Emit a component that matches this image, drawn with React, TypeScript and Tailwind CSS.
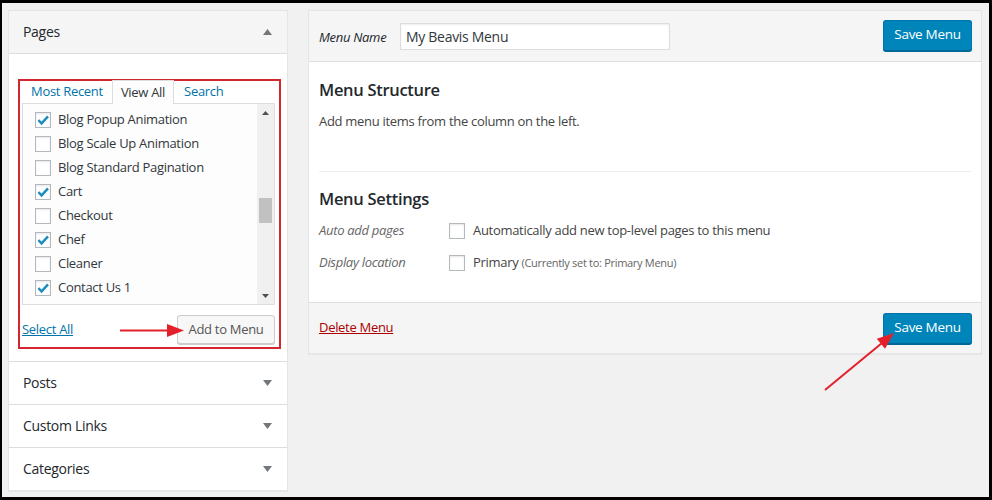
import React from 'react';

const pages: [string, boolean][] = [
  ['Blog Popup Animation', true],
  ['Blog Scale Up Animation', false],
  ['Blog Standard Pagination', false],
  ['Cart', true],
  ['Checkout', false],
  ['Chef', true],
  ['Cleaner', false],
  ['Contact Us 1', true],
];

function Checkbox({ checked }: { checked?: boolean }) {
  return (
    <span className="w-4 h-4 shrink-0 border border-[#b4b9be] bg-white shadow-[inset_0_1px_2px_rgba(0,0,0,0.1)] flex items-center justify-center">
      {checked && (
        <svg width="14" height="14" viewBox="0 0 14 14">
          <path d="M2.4 7.2 L5.6 10.4 L12 3.4" fill="none" stroke="#1e8cbe" strokeWidth="2.4" />
        </svg>
      )}
    </span>
  );
}

function Caret({ up }: { up?: boolean }) {
  return (
    <svg width="9" height="6" viewBox="0 0 9 6">
      <polygon points={up ? '0,6 9,6 4.5,0' : '0,0 9,0 4.5,6'} fill="#72777c" />
    </svg>
  );
}

function SaveButton() {
  return (
    <button className="h-[31px] w-[89px] rounded-[3px] bg-[#0085ba] border border-[#0073aa] border-b-[#006799] shadow-[0_1px_0_#006799] text-white text-[13.5px] leading-none">
      Save Menu
    </button>
  );
}

function Section({ title }: { title: string }) {
  return (
    <div className="h-[43px] border-t border-[#dddddd] flex items-center justify-between pl-[14px] pr-[15px]">
      <span className="text-[14px] leading-[20px] -mt-[1px] text-[#23282d]">{title}</span>
      <Caret />
    </div>
  );
}

export default function App() {
  return (
    <div className="relative w-[992px] h-[500px] bg-black pt-[3px] pl-[2px] pr-[3px] pb-[3px] font-['Open_Sans',sans-serif] tracking-[-0.3px]">
      <div className="h-full bg-[#f1f1f1] flex items-start pt-[7px] pl-[6px] gap-[20px]">
        {/* left column */}
        <div className="w-[280px] h-[481px] border border-[#e5e5e5] bg-white shadow-[0_1px_1px_rgba(0,0,0,0.04)] flex flex-col">
          <div className="h-[43px] shrink-0 bg-[#f5f5f5] border-b border-[#dddddd] flex items-center justify-between pl-[14px] pr-[15px]">
            <span className="text-[14px] leading-[20px] -mt-[1px] text-[#23282d]">Pages</span>
            <Caret up />
          </div>
          <div className="h-[307px] shrink-0 pt-[25px] pl-[9px] pr-[6px]">
            <div className="h-[270px] border-2 border-[#d3262f] pl-[2px] pr-[4px] flex flex-col">
              <div className="h-[22px] flex items-end text-[13px]">
                <span className="px-[9px] h-[22px] flex items-center text-[#0073aa]">Most Recent</span>
                <span className="px-[8px] h-[24px] -mt-[2px] flex items-center border border-b-0 border-[#dddddd] bg-[#fdfdfd] text-[#32373c] relative top-[1px]">
                  View All
                </span>
                <span className="px-[10px] h-[22px] flex items-center text-[#0073aa]">Search</span>
              </div>
              <div className="h-[202px] border border-[#dddddd] bg-[#fdfdfd] flex overflow-hidden">
                <div className="flex-1 pt-[4px] pl-[12px]">
                  {pages.map(([name, checked]) => (
                    <div key={name} className="h-[24px] flex items-center gap-[7px] text-[13px] text-[#32373c]">
                      <Checkbox checked={checked} />
                      <span>{name}</span>
                    </div>
                  ))}
                  <div className="h-[24px] flex items-center">
                    <Checkbox />
                  </div>
                </div>
                <div className="w-[17px] h-full bg-[#f0f0f0] flex flex-col items-center">
                  <div className="h-[17px] flex items-center justify-center">
                    <svg width="7" height="4" viewBox="0 0 7 4">
                      <polygon points="0,4 7,4 3.5,0" fill="#505050" />
                    </svg>
                  </div>
                  <div className="flex-1 w-full px-[2px]">
                    <div className="mt-[77px] h-[25px] bg-[#c1c1c1]" />
                  </div>
                  <div className="h-[17px] flex items-center justify-center">
                    <svg width="7" height="4" viewBox="0 0 7 4">
                      <polygon points="0,0 7,0 3.5,4" fill="#505050" />
                    </svg>
                  </div>
                </div>
              </div>
              <div className="flex-1 flex items-center justify-between pt-[7px]">
                <span className="text-[13px] text-[#0073aa] underline">Select All</span>
                <button className="h-[29px] w-[98px] rounded-[3px] bg-[#f7f7f7] border border-[#cccccc] shadow-[0_1px_0_#cccccc] text-[13px] text-[#555555]">
                  Add to Menu
                </button>
              </div>
            </div>
          </div>
          <Section title="Posts" />
          <Section title="Custom Links" />
          <Section title="Categories" />
        </div>

        {/* right column */}
        <div className="w-[674px] h-[344px] border border-[#e5e5e5] bg-white shadow-[0_1px_1px_rgba(0,0,0,0.04)] flex flex-col">
          <div className="h-[51px] shrink-0 bg-[#f5f5f5] border-b border-[#dfdfdf] flex items-center pl-[10px] pr-[9px]">
            <span className="w-[81px] text-[13px] leading-[20px] mt-[1px] italic text-[#23282d]">Menu Name</span>
            <div className="w-[270px] h-[27px] border border-[#dddddd] bg-white shadow-[inset_0_1px_2px_rgba(0,0,0,0.07)] flex items-center pl-[5px] text-[14px] text-[#32373c]">
              My Beavis Menu
            </div>
            <div className="flex-1" />
            <div className="-mt-[2px]">
              <SaveButton />
            </div>
          </div>
          <div className="h-[240px] shrink-0 px-[10px] pt-[16px]">
            <h2 className="text-[16.5px] leading-[24px] font-semibold text-[#23282d]">Menu Structure</h2>
            <p className="mt-[9px] text-[13px] leading-[20px] text-[#444444]">Add menu items from the column on the left.</p>
            <div className="mt-[40px] border-t border-[#eeeeee]" />
            <h2 className="mt-[15px] text-[16.5px] leading-[24px] font-semibold text-[#23282d]">Menu Settings</h2>
            <div className="mt-[8px] h-[24px] flex items-center text-[13px]">
              <span className="w-[130px] italic text-[#666666]">Auto add pages</span>
              <Checkbox />
              <span className="ml-[8px] text-[#444444]">Automatically add new top-level pages to this menu</span>
            </div>
            <div className="mt-[8px] h-[24px] flex items-center text-[13px]">
              <span className="w-[130px] italic text-[#666666]">Display location</span>
              <Checkbox />
              <span className="ml-[8px] text-[#444444]">
                Primary <span className="text-[11px] text-[#666666]">(Currently set to: Primary Menu)</span>
              </span>
            </div>
          </div>
          <div className="flex-1 bg-[#f5f5f5] border-t border-[#dfdfdf] flex items-center justify-between pl-[10px] pr-[9px]">
            <span className="text-[13px] text-[#aa0000] underline">Delete Menu</span>
            <SaveButton />
          </div>
        </div>
      </div>

      {/* annotation arrows */}
      <svg className="absolute top-0 left-0 pointer-events-none" width="992" height="500" viewBox="0 0 992 500">
        <line x1="120" y1="330.5" x2="170" y2="330.5" stroke="#e3202a" strokeWidth="2" />
        <polygon points="167,324 184,330.5 167,337" fill="#e3202a" />
        <line x1="825" y1="390" x2="882" y2="343" stroke="#e3202a" strokeWidth="2" />
        <polygon points="894,333 885,348.8 876.8,338.8" fill="#e3202a" />
      </svg>
    </div>
  );
}
